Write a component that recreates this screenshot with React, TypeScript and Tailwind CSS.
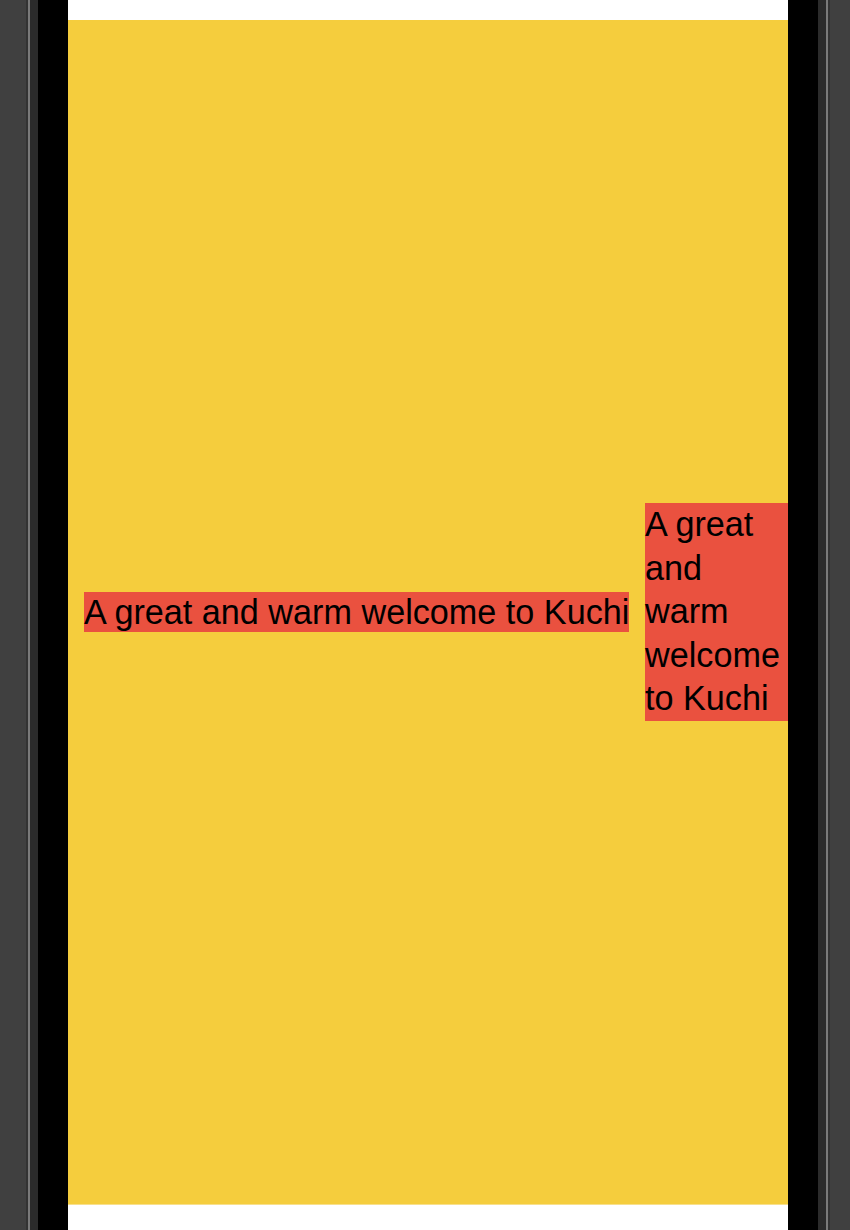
const font = { fontFamily: '"Liberation Sans", Arial, sans-serif' };

function LeftBezel() {
  return (
    <div className="flex h-full shrink-0">
      <div className="w-[26px] bg-[#404040]" />
      <div className="w-[2px] bg-[#333333]" />
      <div className="w-[2px] bg-[#7a7a7a]" />
      <div className="w-[8px] bg-[#2b2b2b]" />
      <div className="w-[30px] bg-black" />
    </div>
  );
}

function RightBezel() {
  return (
    <div className="flex h-full shrink-0">
      <div className="w-[30px] bg-black" />
      <div className="w-[8px] bg-[#2b2b2b]" />
      <div className="w-[2px] bg-[#7a7a7a]" />
      <div className="w-[2px] bg-[#333333]" />
      <div className="w-[20px] bg-[#404040]" />
    </div>
  );
}

export default function App() {
  return (
    <div className="flex h-[1230px] w-[850px] overflow-hidden" style={font}>
      <LeftBezel />
      <div className="flex w-[720px] flex-col bg-white">
        <div className="h-[20px] bg-white" />
        <div className="flex flex-1 items-center gap-[16px] border-b border-[#f8e08c] bg-[#f5cd3d] pl-[16px] text-[34.2px] text-black">
          <span className="h-[40px] w-[545px] shrink-0 whitespace-nowrap bg-[#ea513f] leading-[40px]">
            A great and warm welcome to Kuchi
          </span>
          <span className="flex-1 bg-[#ea513f] leading-[43.4px]">
            A great and warm welcome to Kuchi
          </span>
        </div>
        <div className="h-[25px] bg-white" />
      </div>
      <RightBezel />
    </div>
  );
}
